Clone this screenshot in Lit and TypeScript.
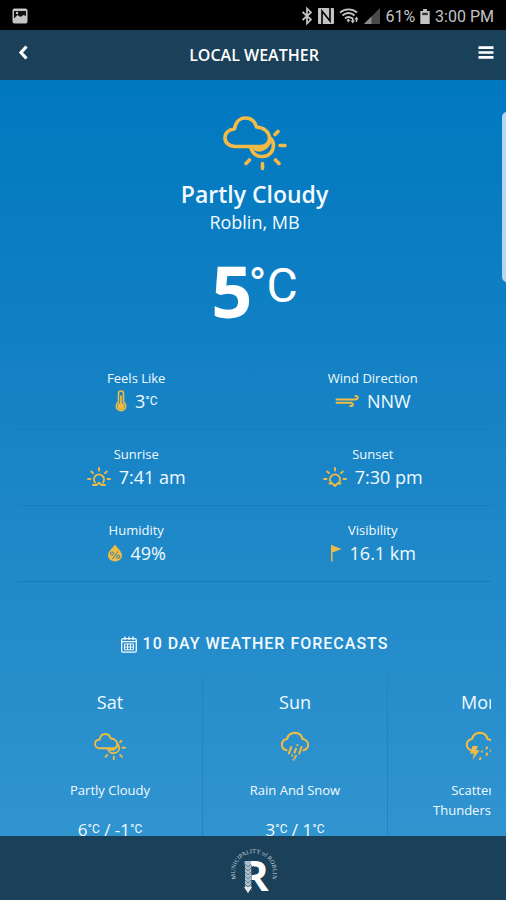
import { LitElement, html, css, svg, nothing } from "lit";
import { customElement, property } from "lit/decorators.js";

type IconName =
  | "partly-cloudy" | "rain-snow" | "storm" | "thermometer" | "wind"
  | "sunrise" | "sunset" | "drop" | "flag" | "calendar" | "back" | "menu"
  | "picture" | "bluetooth" | "nfc" | "wifi" | "signal" | "battery";

const icons: Record<IconName, { box: string; art: unknown }> = {
  "partly-cloudy": {
    box: "0 0 64 54",
    art: svg`<g fill="none" stroke="currentColor" stroke-width="3.600" stroke-linecap="round" stroke-linejoin="round">
      <path d="M12 30.500C6 30.500 2 26.500 2 22C2 17 5.500 13.500 11.500 13C12.500 6 17 2 22.500 2C28 2 32 5.500 33.500 11C41 11.500 46.500 16 46.500 22.500C46.500 27.500 42 30.500 38 30.500Z"/>
      <path d="M28 32C29.500 37 33.500 40.500 39 40.500C45.500 40.500 50.500 36 50.500 29.500C50.500 26.500 49 23.500 47 22"/>
      <path d="M32 32.500C36 35.500 43 33.500 46.500 26"/>
      <path d="M52 18.500L55 15.500M57 29.500H62M52.500 44L56 47.500M39.500 47.500V52.500M26.500 44L23 47.500"/></g>`,
  },
  "rain-snow": {
    box: "0 0 32 32",
    art: svg`<g fill="none" stroke="currentColor" stroke-width="2.200" stroke-linecap="round" stroke-linejoin="round">
      <path d="M7 20.500C4 20 2 17.500 2 14.500C2 11 4.500 9 7.500 8.500C8.500 4.500 12 2 16 2C20 2 23 4.500 24 8.500C27.500 9 30 11.500 30 14.500C30 17.500 28 20 25 20.500"/>
      <path d="M12 17L9.500 24M17 19L15.500 23M23 17L20.500 24M18.500 15V15.200M13 26V26.200M17 26.500L16 28.500M14.500 30.500V30.600"/></g>`,
  },
  storm: {
    box: "0 0 32 32",
    art: svg`<g fill="none" stroke="currentColor" stroke-width="2.200" stroke-linecap="round" stroke-linejoin="round">
      <path d="M6 20.500C3.500 19.500 2 17.500 2 14.500C2 11 4.500 9 7.500 8.500C8.500 4.500 12 2 16 2C20 2 23 4.500 24 8.500C27 9 29 10.500 30 12.500"/>
      <path d="M18 22V22.200M23.500 17.500L23 18.500M23.500 24L23 25.500M27.500 21L28.500 21.500M16.500 29L16 30M28.500 27V27.200"/></g>
      <path fill="currentColor" d="M8 16H13.500L12 20.500H15.500L8 31L9.500 24H5.500Z"/>`,
  },
  thermometer: {
    box: "0 0 12 22",
    art: svg`<path fill="none" stroke="currentColor" stroke-width="1.600" d="M3.500 12V3.500A2.500 2.500 0 0 1 8.500 3.500V12A4.700 4.700 0 1 1 3.500 12Z"/>
      <circle cx="6" cy="16.300" r="3.400" fill="currentColor"/><path stroke="currentColor" stroke-width="1.800" d="M6 5.500V15"/>`,
  },
  wind: {
    box: "0 0 24 14",
    art: svg`<g fill="none" stroke="currentColor" stroke-width="2" stroke-linecap="round">
      <path d="M1.500 5.500H20C23.500 5.500 23.500 1.800 20.500 2M1.500 8.700H15.500C19 9 18.500 12.800 15.200 12"/></g>`,
  },
  sunrise: {
    box: "0 0 24 20",
    art: svg`<g fill="none" stroke="currentColor" stroke-width="1.900" stroke-linecap="round" stroke-linejoin="round">
      <path d="M8 15.500A5 5 0 1 1 16 15.500M1 12H3.500M20.500 12H23M4.300 4.500L6 6.200M19.700 4.500L18 6.200M12 1V3.500M6 18H9.500L12 15.800L14.500 18H18"/></g>`,
  },
  sunset: {
    box: "0 0 24 20",
    art: svg`<g fill="none" stroke="currentColor" stroke-width="1.900" stroke-linecap="round" stroke-linejoin="round">
      <path d="M8 15.500A5 5 0 1 1 16 15.500M1 12H3.500M20.500 12H23M4.300 4.500L6 6.200M19.700 4.500L18 6.200M12 1V3.500M6.500 16.500H9.500L12 19L14.500 16.500H17.500"/></g>`,
  },
  drop: {
    box: "0 0 16 18",
    art: svg`<path fill="currentColor" d="M8 0.500C10.500 4 15 7.500 15 11.500A7 6 0 0 1 1 11.500C1 7.500 5.500 4 8 0.500Z"/>
      <g fill="none" stroke="#5d8f8c" stroke-width="1.200"><path d="M11 7.500L5.500 15"/><circle cx="5" cy="9.500" r="1.500"/><circle cx="11.200" cy="12.800" r="1.500"/></g>`,
  },
  flag: {
    box: "0 0 12 18",
    art: svg`<path fill="currentColor" d="M1 1H2.500V17.500H1ZM2.500 1.500L11.500 5L2.500 8.500Z"/>`,
  },
  calendar: {
    box: "0 0 16 17",
    art: svg`<g fill="none" stroke="currentColor"><rect x="0.700" y="2.700" width="14.600" height="13.500" rx="1.500" stroke-width="1.300"/>
      <path stroke-width="1.300" d="M1 5.700H15M4 0.500V4M8 0.500V4M12 0.500V4"/>
      <path d="M3.500 8H12.500V13.800H3.500ZM3.500 11H12.500M6.500 8V14M9.500 8V14"/></g>`,
  },
  back: {
    box: "0 0 10 15",
    art: svg`<path fill="none" stroke="currentColor" stroke-width="3.200" d="M8.500 1.500L3 7.500L8.500 13.500"/>`,
  },
  menu: {
    box: "0 0 16 13",
    art: svg`<path stroke="currentColor" stroke-width="2.600" d="M0.500 1.600H15.500M0.500 6.500H15.500M0.500 11.400H15.500"/>`,
  },
  picture: {
    box: "0 0 16 16",
    art: svg`<rect x="0.500" y="0.500" width="15" height="15" rx="2" fill="currentColor"/>
      <path fill="#111" d="M2 3H14V8L11.500 7L8.500 9L5.500 7L2 10.500Z"/><circle cx="5" cy="5" r="1.200" fill="currentColor"/>`,
  },
  bluetooth: {
    box: "0 0 12 18",
    art: svg`<path fill="none" stroke="currentColor" stroke-width="1.700" d="M1.500 5L10 12.500L6 16.500V1.500L10 5.500L1.500 13"/>`,
  },
  nfc: {
    box: "0 0 16 16",
    art: svg`<rect width="16" height="16" rx="1" fill="currentColor"/>
      <path fill="none" stroke="#000" stroke-width="1.600" d="M4 16V3L12 13V0"/>`,
  },
  wifi: {
    box: "0 0 20 16",
    art: svg`<g fill="none" stroke="currentColor" stroke-width="1.900"><path d="M1 4.500C6 0.300 13 0.300 18 4.500M3.500 7.500C7 4.200 12 4.200 15.500 7.500M6 10.500C8 8.500 11 8.500 13 10.500"/></g>
      <path fill="currentColor" d="M7.500 12L9.500 10.800L11 12.300L9.500 14.500ZM11.500 12.500H13V9.500H14.500V12.500H16L13.700 15.500ZM15.500 11.500L17.500 8.500L19.500 11.500H18.200V14H16.800V11.500Z"/>`,
  },
  signal: {
    box: "0 0 16 16",
    art: svg`<path fill="#4a4a4a" d="M16 0V16H0Z"/><path fill="#8c8c8c" d="M7.500 8.500V16H0Z"/>`,
  },
  battery: {
    box: "0 0 10 16",
    art: svg`<path fill="currentColor" d="M3 0H7V2H10V16H0V2H3Z"/><path fill="#333" d="M2 4H8V6.500H2Z"/>`,
  },
};

@customElement("wx-icon")
class WxIcon extends LitElement {
  @property() name: IconName = "partly-cloudy";
  static styles = css`
    :host { display: block; flex: none; }
    svg { display: block; width: 100%; height: 100%; overflow: visible; }
  `;
  render() {
    const icon = icons[this.name];
    return html`<svg viewBox=${icon.box} aria-hidden="true">${icon.art}</svg>`;
  }
}

interface Stat { label: string; icon: IconName; value: string; unit?: boolean }
interface Day { day: string; icon: IconName; text: string; high: string; low: string }

const stats: Stat[] = [
  { label: "Feels Like", icon: "thermometer", value: "3", unit: true },
  { label: "Wind Direction", icon: "wind", value: "NNW" },
  { label: "Sunrise", icon: "sunrise", value: "7:41 am" },
  { label: "Sunset", icon: "sunset", value: "7:30 pm" },
  { label: "Humidity", icon: "drop", value: "49%" },
  { label: "Visibility", icon: "flag", value: "16.1 km" },
];

const days: Day[] = [
  { day: "Sat", icon: "partly-cloudy", text: "Partly Cloudy", high: "6", low: "-1" },
  { day: "Sun", icon: "rain-snow", text: "Rain And Snow", high: "3", low: "1" },
  { day: "Mon", icon: "storm", text: "Scattered Thunderstorms", high: "", low: "" },
];

@customElement("app-root")
class AppRoot extends LitElement {
  static styles = css`
    :host {
      display: flex;
      flex-direction: column;
      height: 100vh;
      overflow: hidden;
      color: #f2faff;
      font-family: "Open Sans", "Noto Sans", sans-serif;
      font-size: 18px;
    }
    * { box-sizing: border-box; }
    h1, h2, h3, p, dl, dt, dd, ul { margin: 0; padding: 0; font-weight: 400; }
    .status {
      flex: none;
      display: flex;
      align-items: center;
      gap: 5px;
      height: 30px;
      padding: 2px 12px 0;
      background: #000;
      color: #c4c4c4;
      font-family: Roboto, sans-serif;
      font-size: 16px;
    }
    .status .picture { width: 16px; height: 16px; margin-right: auto; }
    .bluetooth { width: 12px; height: 18px; }
    .nfc { width: 16px; height: 16px; }
    .wifi { width: 20px; height: 16px; }
    .signal { width: 16px; height: 16px; }
    .battery { width: 10px; height: 15px; }
    .bar {
      flex: none;
      display: flex;
      align-items: center;
      justify-content: space-between;
      height: 50px;
      padding: 0 12px 0 16px;
      background: #1b4059;
      color: #fff;
    }
    .bar h1 { font-size: 16px; font-weight: 600; }
    .bar button {
      display: flex;
      padding: 0 0 6px;
      border: 0;
      background: none;
      color: inherit;
    }
    .back { width: 14px; height: 15px; }
    .menu { width: 16px; height: 13px; }
    main {
      flex: 1;
      min-height: 0;
      position: relative;
      overflow: hidden;
      padding: 0 15px 0 18px;
      background: linear-gradient(#0078c0, #1783c5 45%, #3094cf);
    }
    .thumb {
      position: absolute;
      top: 32px;
      right: -6px;
      width: 10px;
      height: 170px;
      border-radius: 6px;
      background: #b4d6f0;
    }
    .now {
      display: flex;
      flex-direction: column;
      align-items: center;
      padding-top: 36px;
    }
    .hero { width: 64px; height: 54px; color: #f3ba45; }
    .now h2 { font-size: 23px; line-height: 32px; font-weight: 600; margin-top: 8px; }
    .place { line-height: 24px; }
    .temp { display: flex; margin-top: 20px; line-height: 72px; }
    .temp strong { font-size: 72px; font-weight: 700; color: #fff; }
    .temp span { margin-left: -4px; font: 400 48px/64px Roboto, sans-serif; color: #fff; }
    .stats { display: grid; grid-template-columns: 1fr 1fr; margin-top: 28px; }
    .stat {
      display: flex;
      flex-direction: column;
      align-items: center;
      height: 76px;
      padding-top: 14px;
      border-bottom: 1px solid #177cbc;
    }
    .stat dt { font-size: 13px; line-height: 20px; }
    .stat dd { display: flex; align-items: center; gap: 8px; line-height: 26px; }
    .stat wx-icon, .day wx-icon { color: #efbb45; }
    .thermometer { width: 12px; height: 22px; }
    .wind { width: 24px; height: 14px; }
    .sunrise, .sunset { width: 24px; height: 20px; }
    .drop { width: 16px; height: 18px; }
    .flag { width: 12px; height: 18px; }
    small { font: 400 12px/1 Roboto, sans-serif; vertical-align: 3px; }
    .heading {
      display: flex;
      align-items: center;
      justify-content: center;
      gap: 6px;
      margin-top: 50px;
      font: 500 16px/24px Roboto, sans-serif;
      letter-spacing: 1px;
    }
    .calendar { width: 16px; height: 17px; }
    .days { display: flex; margin-top: 20px; overflow: hidden; list-style: none; }
    .day {
      flex: 0 0 185px;
      display: flex;
      flex-direction: column;
      align-items: center;
      padding: 12px 40px 0;
      border-right: 1px solid #2484c2;
      text-align: center;
    }
    .day h3 { font-size: 18px; line-height: 28px; }
    .pic { display: flex; align-items: center; height: 60px; }
    .day .partly-cloudy { width: 32px; height: 27px; }
    .day .rain-snow, .day .storm { width: 30px; height: 30px; }
    .desc { height: 44px; padding-top: 4px; font-size: 13px; line-height: 20px; white-space: nowrap; }
    .wrap { white-space: normal; }
    .range { font-size: 17px; line-height: 20px; white-space: nowrap; }
    footer {
      flex: none;
      display: flex;
      justify-content: center;
      align-items: center;
      height: 64px;
      padding-top: 4px;
      background: #1b4059;
    }
    .logo { width: 56px; height: 56px; overflow: visible; }
    .ring { font: 400 6px "Liberation Serif", serif; fill: #c3d2db; }
    .letter { font: 700 42px "Open Sans", sans-serif; fill: #fff; }
  `;

  render() {
    return html`
      <div class="status">
        <wx-icon class="picture" name="picture"></wx-icon>
        <wx-icon class="bluetooth" name="bluetooth"></wx-icon>
        <wx-icon class="nfc" name="nfc"></wx-icon>
        <wx-icon class="wifi" name="wifi"></wx-icon>
        <wx-icon class="signal" name="signal"></wx-icon>
        <span>61%</span>
        <wx-icon class="battery" name="battery"></wx-icon>
        <span>3:00 PM</span>
      </div>
      <header class="bar">
        <button aria-label="Back"><wx-icon class="back" name="back"></wx-icon></button>
        <h1>LOCAL WEATHER</h1>
        <button aria-label="Menu"><wx-icon class="menu" name="menu"></wx-icon></button>
      </header>
      <main>
        <section class="now">
          <wx-icon class="hero" name="partly-cloudy"></wx-icon>
          <h2>Partly Cloudy</h2>
          <p class="place">Roblin, MB</p>
          <p class="temp"><strong>5</strong><span>°C</span></p>
        </section>
        <dl class="stats">
          ${stats.map((s) => html`
            <div class="stat">
              <dt>${s.label}</dt>
              <dd><wx-icon class=${s.icon} name=${s.icon}></wx-icon>
                <span>${s.value}${s.unit ? html`<small>°C</small>` : nothing}</span></dd>
            </div>`)}
        </dl>
        <h2 class="heading"><wx-icon class="calendar" name="calendar"></wx-icon>10 DAY WEATHER FORECASTS</h2>
        <ul class="days">
          ${days.map((d) => html`
            <li class="day">
              <h3>${d.day}</h3>
              <div class="pic"><wx-icon class=${d.icon} name=${d.icon}></wx-icon></div>
              <p class="desc ${d.text.length > 16 ? "wrap" : ""}">${d.text}</p>
              ${d.high ? html`<p class="range">${d.high}<small>°C</small> / ${d.low}<small>°C</small></p>` : nothing}
            </li>`)}
        </ul>
        <div class="thumb"></div>
      </main>
      <footer>
        <svg class="logo" viewBox="0 0 56 56" role="img" aria-label="Municipality of Roblin">
          <defs><path id="arc" d="M14.400 42.200A19 19 0 1 1 43.600 42.200"/></defs>
          <text class="ring"><textPath href="#arc" startOffset="50%" text-anchor="middle">MUNICIPALITY of ROBLIN</textPath></text>
          <text class="letter" x="16" y="49">R</text>
          <path fill="#1b4059" d="M18 23H26.500V51H18Z"/>
          <path fill="#a9bfcc" d="M20 19H26V46L23 51L20 46Z"/>
          <path fill="none" stroke="#5f7f93" stroke-width="1" d="M20 22L23 25L26 22M20 26L23 29L26 26M20 30L23 33L26 30M20 34L23 37L26 34M20 38L23 41L26 38M20 42L23 45L26 42"/>
          <path fill="#e4ecf0" d="M19 45H27L23 51Z"/>
        </svg>
      </footer>
    `;
  }
}
